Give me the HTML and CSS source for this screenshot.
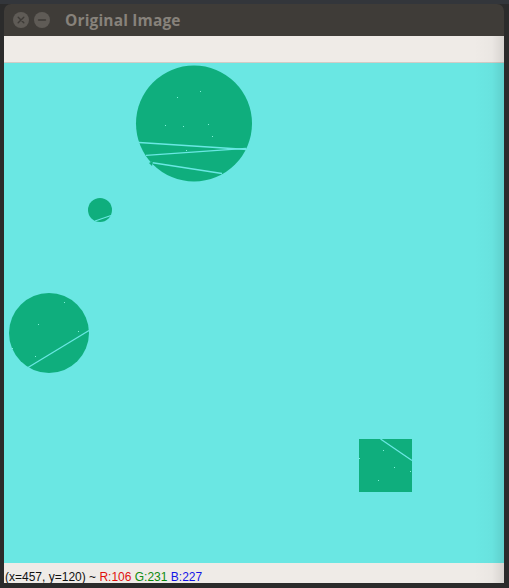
FILE: index.html
```html
<!DOCTYPE html>
<html>
<head>
<meta charset="utf-8">
<link rel="stylesheet" href="styles.css">
</head>
<body>
<div class="desk">
  <div class="window">
    <div class="titlebar">
      <span class="btn close"><svg width="16" height="16" viewBox="0 0 16 16"><path d="M5.2 5.2 L10.8 10.8 M10.8 5.2 L5.2 10.8" stroke="#3d3a36" stroke-width="1.4" stroke-linecap="round"/></svg></span>
      <span class="btn min"><svg width="16" height="16" viewBox="0 0 16 16"><path d="M4.5 8 H11.5" stroke="#3d3a36" stroke-width="1.4" stroke-linecap="round"/></svg></span>
      <span class="title">Original Image</span>
    </div>
    <div class="toolbar"></div>
    <div class="canvas">
      <svg width="500" height="500" viewBox="0 0 500 500">
        <rect width="500" height="500" fill="#6ae7e3"/>
        <g transform="translate(-4,-63)">
          <circle cx="194" cy="123.5" r="58" fill="#0fae7d"/>
          <g stroke="#6ae7e3" stroke-width="1.3">
            <line x1="139" y1="142.5" x2="247" y2="149.5"/>
            <line x1="146" y1="155.3" x2="246" y2="148.3"/>
            <line x1="151" y1="162.5" x2="222" y2="173.5"/>
          </g>
          <path d="M149 163 L153 161 L152 166 Z" fill="#0fae7d"/>
          <circle cx="100" cy="210" r="12" fill="#0fae7d"/>
          <line x1="95" y1="221" x2="111" y2="215.5" stroke="#6ae7e3" stroke-width="1.2"/>
          <circle cx="49" cy="333" r="40" fill="#0fae7d"/>
          <line x1="28" y1="367.5" x2="89" y2="330.5" stroke="#6ae7e3" stroke-width="1.3"/>
          <rect x="359" y="439" width="53" height="53" fill="#0fae7d"/>
          <line x1="380.5" y1="439" x2="412" y2="460.5" stroke="#6ae7e3" stroke-width="1.3"/>
          <g fill="#7ff0d6">
            <rect x="177" y="97" width="1" height="1"/>
            <rect x="200" y="91" width="1" height="1"/>
            <rect x="165" y="125" width="1" height="1"/>
            <rect x="183" y="126" width="1" height="1"/>
            <rect x="208" y="124" width="1" height="1"/>
            <rect x="212" y="136" width="1" height="1"/>
            <rect x="186" y="150" width="1" height="1"/>
            <rect x="64" y="302" width="1" height="1"/>
            <rect x="38" y="324" width="1" height="1"/>
            <rect x="78" y="331" width="1" height="1"/>
            <rect x="12" y="348" width="1" height="1"/>
            <rect x="35" y="356" width="1" height="1"/>
            <rect x="383" y="450" width="1" height="1"/>
            <rect x="394" y="467" width="1" height="1"/>
            <rect x="359" y="458" width="1" height="1"/>
            <rect x="410" y="471" width="1" height="1"/>
            <rect x="378" y="480" width="1" height="1"/>
          </g>
        </g>
      </svg>
    </div>
    <div class="status"><span class="pos">(x=457, y=120) ~ </span><span class="r">R:106</span> <span class="g">G:231</span> <span class="b">B:227</span></div>
    <div class="shade"></div>
  </div>
</div>
</body>
</html>
```

FILE: styles.css
```css
html, body {
  margin: 0;
  padding: 0;
  background: #2b2b2b;
  width: 509px;
  height: 588px;
  overflow: hidden;
}

.desk {
  width: 509px;
  height: 588px;
  padding: 4px 5px 0 4px;
  box-sizing: border-box;
  background: linear-gradient(to bottom, #33363b 0, #33363b 4px, #2b2b2b 4px);
}

.window {
  position: relative;
  width: 500px;
  display: flex;
  flex-direction: column;
}

.titlebar {
  height: 32px;
  background: #3f3c38;
  border-radius: 7px 7px 0 0;
  display: flex;
  align-items: center;
  padding-left: 9px;
  gap: 5px;
  box-sizing: border-box;
}

.btn {
  width: 16px;
  height: 16px;
  border-radius: 50%;
  background: #5f5b56;
  display: flex;
}

.title {
  margin-left: 10px;
  font-family: "Open Sans", "DejaVu Sans", sans-serif;
  font-weight: 700;
  font-size: 15.5px;
  color: #87827b;
  letter-spacing: 0.15px;
}

.toolbar {
  height: 26px;
  background: #efebe7;
  border-bottom: 1px solid #d1ccc6;
}

.canvas {
  height: 500px;
  line-height: 0;
}

.canvas svg {
  display: block;
}

.status {
  height: 20px;
  background: #efebe7;
  font-family: "Liberation Sans", Arial, sans-serif;
  font-size: 12px;
  line-height: 28px;
  padding-left: 1px;
  color: #111;
  overflow: hidden;
  white-space: pre;
}

.status .r { color: #e0100c; }
.status .g { color: #0e8a0e; }
.status .b { color: #1414e6; }

.shade {
  position: absolute;
  right: 0;
  top: 32px;
  bottom: 0;
  width: 30px;
  background: linear-gradient(to right, rgba(0,0,0,0), rgba(0,0,0,0.02) 60%, rgba(0,0,0,0.1));
  pointer-events: none;
}
```
